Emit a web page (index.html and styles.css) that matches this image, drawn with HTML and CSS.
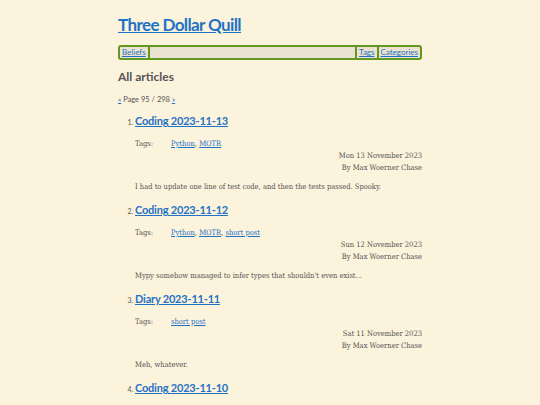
FILE: index.html
```html
<!DOCTYPE html>
<html>
<head>
<meta charset="utf-8">
<link rel="stylesheet" href="styles.css">
</head>
<body>
<div class="page">
  <h1 class="site-title"><a href="#">Three Dollar Quill</a></h1>
  <nav class="menu">
    <a class="menu-item first" href="#">Beliefs</a>
    <span class="menu-spacer"></span>
    <a class="menu-item sep" href="#">Tags</a>
    <a class="menu-item sep" href="#">Categories</a>
  </nav>
  <h2 class="section-title">All articles</h2>
  <p class="pager"><a href="#">«</a> Page 95 / 298 <a href="#">»</a></p>
  <ol class="articles" start="1">
    <li class="article">
      <h3 class="article-title"><a href="#">Coding 2023-11-13</a></h3>
      <div class="tags"><span class="tags-label">Tags:</span><span><a href="#">Python</a>, <a href="#">MOTR</a></span></div>
      <div class="meta">Mon 13 November 2023<br>By Max Woerner Chase</div>
      <p class="excerpt">I had to update one line of test code, and then the tests passed. Spooky.</p>
    </li>
    <li class="article">
      <h3 class="article-title"><a href="#">Coding 2023-11-12</a></h3>
      <div class="tags"><span class="tags-label">Tags:</span><span><a href="#">Python</a>, <a href="#">MOTR</a>, <a href="#">short post</a></span></div>
      <div class="meta">Sun 12 November 2023<br>By Max Woerner Chase</div>
      <p class="excerpt">Mypy somehow managed to infer types that shouldn't even exist...</p>
    </li>
    <li class="article">
      <h3 class="article-title"><a href="#">Diary 2023-11-11</a></h3>
      <div class="tags"><span class="tags-label">Tags:</span><span><a href="#">short post</a></span></div>
      <div class="meta">Sat 11 November 2023<br>By Max Woerner Chase</div>
      <p class="excerpt">Meh, whatever.</p>
    </li>
    <li class="article">
      <h3 class="article-title"><a href="#">Coding 2023-11-10</a></h3>
      <div class="tags"><span class="tags-label">Tags:</span><span><a href="#">Python</a>, <a href="#">MOTR</a></span></div>
      <div class="meta">Fri 10 November 2023<br>By Max Woerner Chase</div>
      <p class="excerpt">More work.</p>
    </li>
  </ol>
</div>
</body>
</html>
```
FILE: styles.css
```css
html, body {
  margin: 0;
  padding: 0;
  background: #fcf3dc;
}
body {
  color: #555555;
  font-family: "DejaVu Serif Condensed", "DejaVu Serif", serif;
  font-stretch: condensed;
  font-size: 7.5px;
}
a { color: #1f72c6; }
.page {
  width: 304px;
  margin: 0 auto;
  padding-top: 14px;
}
.site-title {
  font-family: Lato, "Open Sans", sans-serif;
  font-stretch: normal;
  font-size: 17px;
  letter-spacing: -0.6px;
  font-weight: 700;
  margin: 0;
  line-height: 22px;
}
.menu {
  display: flex;
  margin-top: 9px;
  border: 2px solid #629822;
  border-radius: 3px;
  background: #ebe3cf;
  height: 11px;
  font-family: Lato, "Open Sans", sans-serif;
  font-stretch: normal;
  font-size: 8px;
  line-height: 11px;
}
.menu-item { padding: 0 2px; }
.menu-item.first { border-right: 2px solid #629822; }
.menu-item.sep { border-left: 2px solid #629822; }
.menu-spacer { flex: 1; }
.section-title {
  font-family: Lato, "Open Sans", sans-serif;
  font-stretch: normal;
  font-size: 12px;
  font-weight: 700;
  margin: 9px 0 0;
  line-height: 16px;
}
.pager {
  font-family: Lato, "Open Sans", sans-serif;
  font-stretch: normal;
  font-size: 7.5px;
  margin: 10px 0 0;
  line-height: 10px;
}
.articles {
  margin: 8px 0 0;
  padding-left: 17px;
}
.article::marker {
  font-family: Lato, "Open Sans", sans-serif;
  font-size: 7px;
}
.article-title {
  font-family: Lato, "Open Sans", sans-serif;
  font-stretch: normal;
  font-size: 11px;
  letter-spacing: -0.2px;
  font-weight: 700;
  margin: 0;
  line-height: 16px;
}
.tags {
  display: flex;
  margin-top: 9px;
  line-height: 12px;
}
.tags-label { width: 36px; }
.meta {
  text-align: right;
  line-height: 12px;
}
.excerpt {
  margin: 7px 0 0;
  line-height: 12px;
  padding-bottom: 9px;
}
```
